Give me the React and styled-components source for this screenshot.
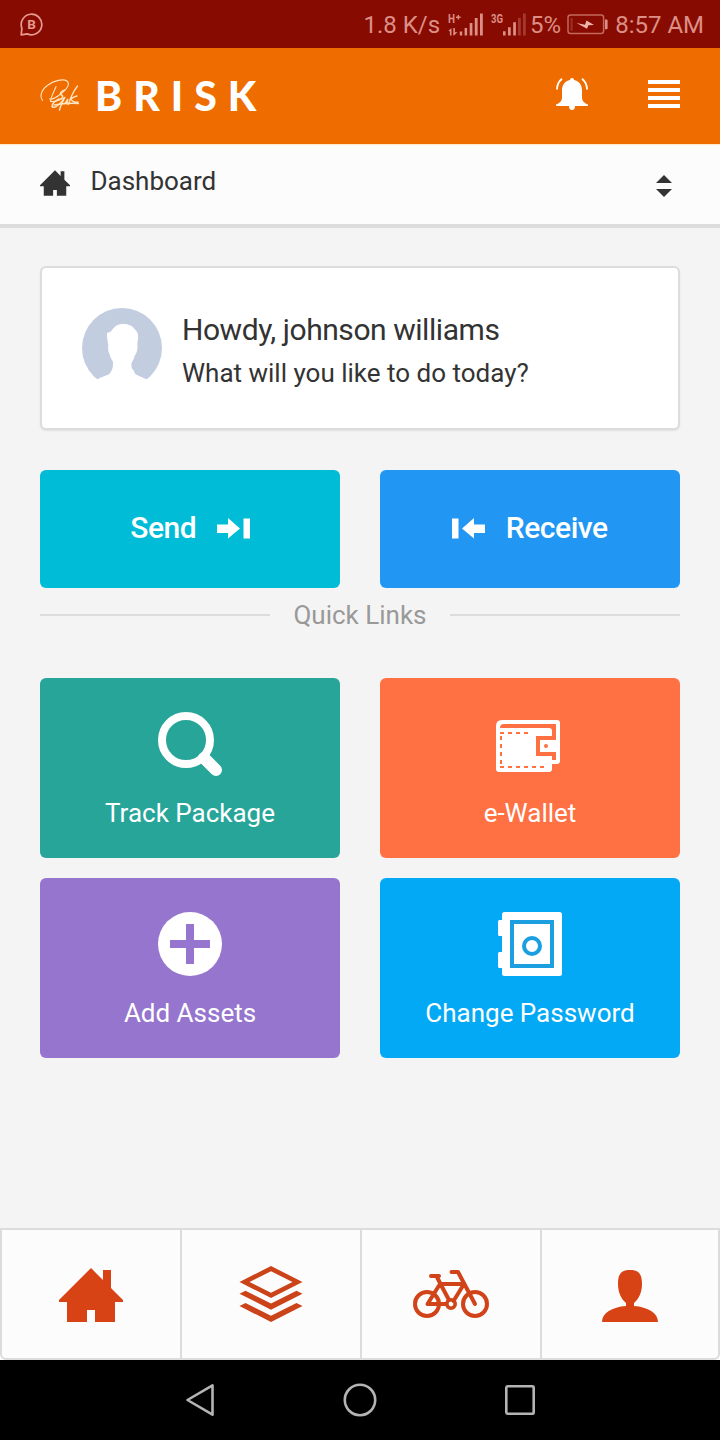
import React from 'react'
import styled, { createGlobalStyle } from 'styled-components'

const GlobalStyle = createGlobalStyle`
* {
  box-sizing: border-box;
}
body {
  margin: 0;
  background: #fff;
  font-family: Roboto, "Liberation Sans", sans-serif;
  color: #333;
}
svg {
  display: block;
  flex: none;
}
`

const HOME = 'M32 0L44 12V2H52V20L64 32V34H56V54H36V42H28V54H8V34H0V32Z'

const ChatIcon = () => (
  <svg width="24" height="24" viewBox="0 0 24 24" fill="none" stroke="#e69a90" strokeWidth="1.7">
    <path d="M1.2 21.900L1.900 15.200A10.300 10.300 0 1 1 7.300 20.900Z" strokeLinejoin="round" />
    <text x="11.500" y="16.200" fill="#e69a90" stroke="none" fontSize="13.500" fontWeight="700" textAnchor="middle">B</text>
  </svg>
)

const SignalH = () => (
  <svg width="36" height="24" viewBox="0 0 36 24" fill="#dc8f86">
    <text x="0" y="9.500" fontSize="12" fontWeight="700" textLength="7" lengthAdjust="spacingAndGlyphs">H</text>
    <path d="M8 3.600h1.600V2h1.400v1.600h1.600V5h-1.600v1.600H9.600V5H8z" />
    <path d="M.3 18L3.500 15V22.600H1.900V18.200zM5.300 15h1.600v4.300h2.600L6 22.600H5.300z" />
    <path d="M11.800 18.600h2.400v4h-2.400zM16.600 15h2.500v7.600h-2.500zM21.700 10h2.700v12.600h-2.700zM26.800 5h2.800v17.600H26.800zM32 .6h2.800v22H32z" />
  </svg>
)

const Signal3G = () => (
  <svg width="36" height="24" viewBox="0 0 36 24" fill="#dc8f86">
    <text x="0" y="9.500" fontSize="12" fontWeight="700" textLength="12" lengthAdjust="spacingAndGlyphs">3G</text>
    <path d="M12 18.300h2.600v4.300H12zM17 14.300h2.700v8.300H17zM22.200 9.300h2.700v13.300h-2.700z" />
    <path opacity=".35" d="M27 5h2.800v17.600H27zM32 .6h2.800v22H32z" />
  </svg>
)

const BatteryIcon = () => (
  <svg width="42" height="22" viewBox="0 0 42 22">
    <rect x="1" y="1" width="35.600" height="18.600" rx="2.500" fill="none" stroke="#c26a5c" strokeWidth="1.500" />
    <path d="M3.600 4h2v12.800h-2z" fill="#9c3226" />
    <path d="M9.500 9L18 10.700 19.500 6.500 27 11 21.400 11.300 20 14.700Z" fill="#eeb3ac" />
    <path d="M38 5.600h1.600q1 0 1 1v7.600q0 1-1 1H38z" fill="#dc8f86" />
  </svg>
)

const Signature = () => (
  <svg width="40" height="38" viewBox="0 -4 40 38" fill="none" stroke="#ffe3bd" strokeWidth="1.1" strokeLinecap="round">
    <path d="M2.500 21.500C-1 17 2 10 8 6C14 1.500 23-.5 27 2C31.500 6 24 13 18 17C15 19 12 20.500 9.500 20" />
    <path d="M16 7.500C14.500 12 11 17 10.500 22.500C14 23 20 21 24 19" />
    <path d="M25 11C21 12.500 19 14.500 21.500 16C23.500 17 23 20 18 21" strokeWidth="1.500" />
    <path d="M12 27.500C14 30.500 21 25 25 18C22.500 23 20 28 19.500 31M12 27.500C12 25 15 22 19 20" strokeWidth="1.500" />
    <path d="M25 24C26.500 23 27 21 28 20C26 24 27 26 29 24" strokeWidth="1.500" />
    <path d="M37.500 7C33 13 30 20 28.500 25.500M37 17C33 18 31 20 31 21C33 22 34 24 38 23M14 26C22 24.500 32 24 38.500 24.500" strokeWidth="1.300" />
  </svg>
)

const BellIcon = () => (
  <svg width="32" height="32" viewBox="0 0 32 32" fill="#fff">
    <path d="M14 2Q14 0 16 0T18 2C23 3 26 7 26 12V19C26 23 28 25 32 26.500V28H19Q19 32 16 32T13 28H0V26.500C4 25 6 23 6 19V12C6 7 9 3 14 2Z" />
    <path d="M6 .8C3 3.200 1 7 1 11.600M26 .8C29 3.200 31 7 31 11.600" fill="none" stroke="#fff" strokeWidth="1.900" />
  </svg>
)

const SortIcon = () => (
  <svg width="16" height="28" viewBox="0 -6 16 28" fill="#333">
    <path d="M0 8L8 0 16 8ZM0 14H16L8 22Z" />
  </svg>
)

const Avatar = () => (
  <svg width="80" height="80" viewBox="0 0 80 80">
    <circle cx="40" cy="40" r="40" fill="#c2cde0" />
    <path
      fill="#fff"
      d="M0 80V71.500H15.400C20 68 25 68 28 65.500C29 63 31.500 61 31 54C28.500 50 28 48 27.500 46C26 44 26 39 26.300 37.500C25.500 33 25 29 25 25C27 24 29 24 30 22C33 18 36 16 41 16C46 15.500 51 18 52.500 21C56 24 56.500 27 56 31C55.500 34 55 37 55.500 38C55.500 42 54.500 46 53 47C52 50 51 53 49.500 55C49 59 50 61 52 63C52.500 67 56 67 64.600 71.500H80V80Z"
    />
  </svg>
)

const SendIcon = () => (
  <svg width="33" height="21" viewBox="0 0 33 21" fill="#fff">
    <path d="M0 6.500H11V0L23 10.500 11 20.500V15H0ZM26.500 .5H33V20.500H26.500Z" />
  </svg>
)

const ReceiveIcon = () => (
  <svg width="33" height="21" viewBox="0 0 33 21" fill="#fff">
    <path d="M33 6.500H22V0L10 10.500 22 20.500V15H33ZM0 .5H6.500V20.500H0Z" />
  </svg>
)

const SearchIcon = () => (
  <svg width="64" height="64" viewBox="0 0 64 64" fill="none" stroke="#fff">
    <circle cx="28" cy="28" r="24" strokeWidth="8" />
    <path d="M46 46L58 58" strokeWidth="12" strokeLinecap="round" />
  </svg>
)

const WalletIcon = () => (
  <svg width="68" height="64" viewBox="0 -6 68 64">
    <path fill="#fff" d="M6 0H61Q64 0 64 3V41Q64 44 61 44H56V49Q56 52 53 52H3Q0 52 0 49V6Q0 0 6 0Z" transform="translate(0 2)" />
    <g transform="translate(0 2)" fill="#ff7043">
      <path d="M8 4H60V20H44V32H60V40H56V36H40V16H56V11Q56 8 53 8H4Q4 4 8 4Z" />
      <circle cx="50" cy="26" r="2" />
      <path d="M4 12H8V14H4ZM12 12H16V14H12ZM20 12H24V14H20ZM28 12H32V14H28Z" />
      <path d="M4 16H6V20H4ZM4 24H6V28H4ZM4 32H6V36H4ZM4 40H6V44H4Z" />
      <path d="M4 46H8V48H4ZM12 46H16V48H12ZM20 46H24V48H20ZM28 46H32V48H28ZM36 46H40V48H36ZM44 46H48V48H44Z" />
    </g>
  </svg>
)

const PlusIcon = () => (
  <svg width="64" height="64" viewBox="0 0 64 64">
    <circle cx="32" cy="32" r="32" fill="#fff" />
    <path fill="#9575cd" d="M28 12H36V28H52V36H36V52H28V36H12V28H28Z" />
  </svg>
)

const SafeIcon = () => (
  <svg width="64" height="64" viewBox="0 0 64 64">
    <path fill="#fff" d="M6.500 0H61.500Q64 0 64 2.500V61.500Q64 64 61.500 64H6.500Q4 64 4 61.500V56H1.500Q0 56 0 54.500V41.500Q0 40 1.500 40H4V24H1.500Q0 24 0 22.500V9.500Q0 8 1.500 8H4V2.500Q4 0 6.500 0Z" />
    <g fill="none" stroke="#1c9fe0" strokeWidth="4">
      <rect x="14" y="10" width="40" height="44" />
      <circle cx="34" cy="34" r="8" />
    </g>
  </svg>
)

const HomeIcon = ({ width, height, color }) => (
  <svg width={width} height={height} viewBox="0 0 64 54" fill={color}>
    <path d={HOME} />
  </svg>
)

const LayersIcon = () => (
  <svg width="64" height="58" viewBox="0 0 64 58" fill="#cb4319">
    <path fillRule="evenodd" d="M32 0L63.500 16 32 32 .5 16ZM10.500 16L32 26.700 53.500 16 32 5.200Z" />
    <path d="M.5 27.700L6.500 24.700 32 37.500 57.500 24.700 63.500 27.700 32 43.700Z" />
    <path d="M.5 40L6.500 37 32 49.700 57.500 37 63.500 40 32 56Z" />
  </svg>
)

const BikeIcon = () => (
  <svg width="76" height="50" viewBox="0 0 76 50" fill="none" stroke="#d14419" strokeWidth="4" strokeLinecap="round" strokeLinejoin="round">
    <circle cx="14" cy="34" r="12" />
    <circle cx="62" cy="34" r="12" />
    <circle cx="38" cy="34" r="4.200" strokeWidth="3.600" />
    <path d="M18 6H26M24 7L27.500 14 36 30M27 14L14.500 34H33M28 14H51L40.500 31" />
    <path d="M38.500 2H45L62 34" />
  </svg>
)

const UserIcon = () => (
  <svg width="56" height="54" viewBox="0 -2 56 54" fill="#d84315">
    <path d="M28 0C37 0 40 4 40 14C40 22 37 29 32 33V36C46 37 56 43 56 52H0C0 43 10 37 24 36V33C19 29 16 22 16 14C16 4 19 0 28 0Z" />
  </svg>
)

const actions = [
  { text: 'Send', color: '#00bcd6', icon: <SendIcon />, reverse: false },
  { text: 'Receive', color: '#2196f3', icon: <ReceiveIcon />, reverse: true },
]

const links = [
  { text: 'Track Package', color: '#27a599', icon: <SearchIcon /> },
  { text: 'e-Wallet', color: '#ff7043', icon: <WalletIcon /> },
  { text: 'Add Assets', color: '#9575cd', icon: <PlusIcon /> },
  { text: 'Change Password', color: '#03a9f4', icon: <SafeIcon /> },
]

const App = () => {
  return (
    <Screen>
      <GlobalStyle />
      <StatusBar>
        <ChatIcon />
        <StatusRight>
          <Speed>1.8 K/s</Speed>
          <Signals>
            <SignalH />
            <Signal3G />
          </Signals>
          <Percent>5%</Percent>
          <BatteryIcon />
          <Clock>8:57 AM</Clock>
        </StatusRight>
      </StatusBar>
      <Header>
        <Signature />
        <Brand>BRISK</Brand>
        <BellIcon />
        <Menu>
          <Bar />
          <Bar />
          <Bar />
          <Bar />
        </Menu>
      </Header>
      <PageSelect>
        <HomeIcon width="30" height="26" color="#333" />
        <PageName>Dashboard</PageName>
        <SortIcon />
      </PageSelect>
      <Content>
        <Card>
          <Avatar />
          <Greeting>
            <Howdy>Howdy, johnson williams</Howdy>
            <Question>What will you like to do today?</Question>
          </Greeting>
        </Card>
        <Actions>
          {actions.map((a) => (
            <Action key={a.text} $color={a.color} $reverse={a.reverse}>
              <ActionText>{a.text}</ActionText>
              {a.icon}
            </Action>
          ))}
        </Actions>
        <Divider>
          <Line />
          <DividerText>Quick Links</DividerText>
          <Line />
        </Divider>
        <Links>
          {links.map((l) => (
            <Tile key={l.text} $color={l.color}>
              {l.icon}
              <TileText>{l.text}</TileText>
            </Tile>
          ))}
        </Links>
      </Content>
      <Tabs>
        <Tab><HomeIcon width="64" height="54" color="#d84315" /></Tab>
        <Tab><LayersIcon /></Tab>
        <Tab><BikeIcon /></Tab>
        <Tab><UserIcon /></Tab>
      </Tabs>
      <SystemNav>
        <svg width="34" height="36" viewBox="0 0 34 36" fill="none" stroke="#b4b4b4" strokeWidth="2.600" strokeLinejoin="round">
          <path d="M4.500 18L29.500 3.300V32.700Z" />
        </svg>
        <svg width="34" height="34" viewBox="0 0 34 34" fill="none" stroke="#b4b4b4" strokeWidth="2.600">
          <circle cx="17" cy="17" r="15.200" />
        </svg>
        <svg width="34" height="34" viewBox="0 0 34 34" fill="none" stroke="#b4b4b4" strokeWidth="2.600">
          <rect x="3.300" y="3.300" width="27.400" height="27.400" rx="1.500" />
        </svg>
      </SystemNav>
    </Screen>
  )
}

export default App

const Screen = styled.div`
width: 720px;
height: 1440px;
display: flex;
flex-direction: column;
overflow: hidden;
`
const StatusBar = styled.div`
height: 48px;
padding: 2px 16px 0 20px;
display: flex;
align-items: center;
justify-content: space-between;
background: #870b00;
color: #dc8f86;
font-size: 24px;
line-height: 28px;
`
const StatusRight = styled.div`
display: flex;
align-items: center;
padding-bottom: 1px;
`
const Speed = styled.span`
margin-right: 8px;
`
const Signals = styled.div`
display: flex;
gap: 7px;
`
const Percent = styled.span`
margin-right: 6px;
margin-left: 3px;
`
const Clock = styled.span`
margin-left: 6px;
`
const Header = styled.div`
height: 96px;
padding: 0 40px 4px;
display: flex;
align-items: center;
background: #ef6c00;
`
const Brand = styled.div`
flex: 1;
margin-left: 15px;
padding-top: 3px;
font-family: Lato, sans-serif;
font-weight: 900;
font-size: 41px;
line-height: 48px;
letter-spacing: 11px;
color: #fff;
`
const Menu = styled.div`
width: 32px;
margin-left: 60px;
display: grid;
gap: 4px;
`
const Bar = styled.div`
height: 4px;
background: #fff;
`
const PageSelect = styled.div`
height: 84px;
padding: 0 48px 4px 40px;
display: flex;
align-items: center;
background: #fcfcfc;
border-top: 1px solid #ffe8c8;
border-bottom: 4px solid #dcdcdc;
`
const PageName = styled.div`
flex: 1;
margin-left: 20.5px;
padding-bottom: 4px;
font-size: 26px;
line-height: 32px;
`
const Content = styled.div`
height: 1000px;
padding: 38px 40px 0;
background: #f4f4f4;
`
const Card = styled.div`
height: 164px;
padding: 0 40px;
display: flex;
align-items: center;
background: #fff;
border: 2px solid #dcdcdc;
border-radius: 6px;
box-shadow: 0 1px 2px rgba(0, 0, 0, 0.08);
`
const Greeting = styled.div`
margin-left: 20px;
padding-top: 6px;
`
const Howdy = styled.div`
font-size: 30px;
line-height: 44px;
letter-spacing: -0.45px;
`
const Question = styled.div`
font-size: 26px;
line-height: 42px;
`
const Actions = styled.div`
margin-top: 40px;
display: grid;
grid-template-columns: 1fr 1fr;
gap: 40px;
`
const Action = styled.div`
height: 118px;
padding-bottom: 2px;
display: flex;
flex-direction: ${(p) => (p.$reverse ? 'row-reverse' : 'row')};
align-items: center;
justify-content: center;
gap: 20.5px;
border-radius: 6px;
background: ${(p) => p.$color};
color: #fff;
`
const ActionText = styled.span`
padding-bottom: 1px;
font-size: 30px;
font-weight: 500;
letter-spacing: -0.45px;
`
const Divider = styled.div`
height: 54px;
display: flex;
align-items: center;
`
const Line = styled.div`
width: 230px;
height: 2px;
background: #dcdcdc;
`
const DividerText = styled.div`
flex: 1;
text-align: center;
font-size: 26px;
color: #999;
`
const Links = styled.div`
margin-top: 36px;
display: grid;
grid-template-columns: 1fr 1fr;
gap: 20px 40px;
`
const Tile = styled.div`
height: 180px;
padding-top: 34px;
display: flex;
flex-direction: column;
align-items: center;
border-radius: 6px;
background: ${(p) => p.$color};
color: #fff;
`
const TileText = styled.div`
margin-top: 21px;
font-size: 26px;
line-height: 32px;
`
const Tabs = styled.div`
height: 132px;
display: grid;
grid-template-columns: 180px 180px 180px 176px;
background: #fcfcfc;
border: 2px solid #dcdcdc;
border-radius: 0 0 6px 6px;
`
const Tab = styled.div`
display: flex;
align-items: center;
justify-content: center;
padding-top: 2px;
border-right: 2px solid #dcdcdc;
&:last-child {
  border-right: none;
}
`
const SystemNav = styled.div`
height: 80px;
display: grid;
grid-template-columns: 160px 160px 160px;
align-items: center;
justify-content: center;
justify-items: center;
background: #000;
`
